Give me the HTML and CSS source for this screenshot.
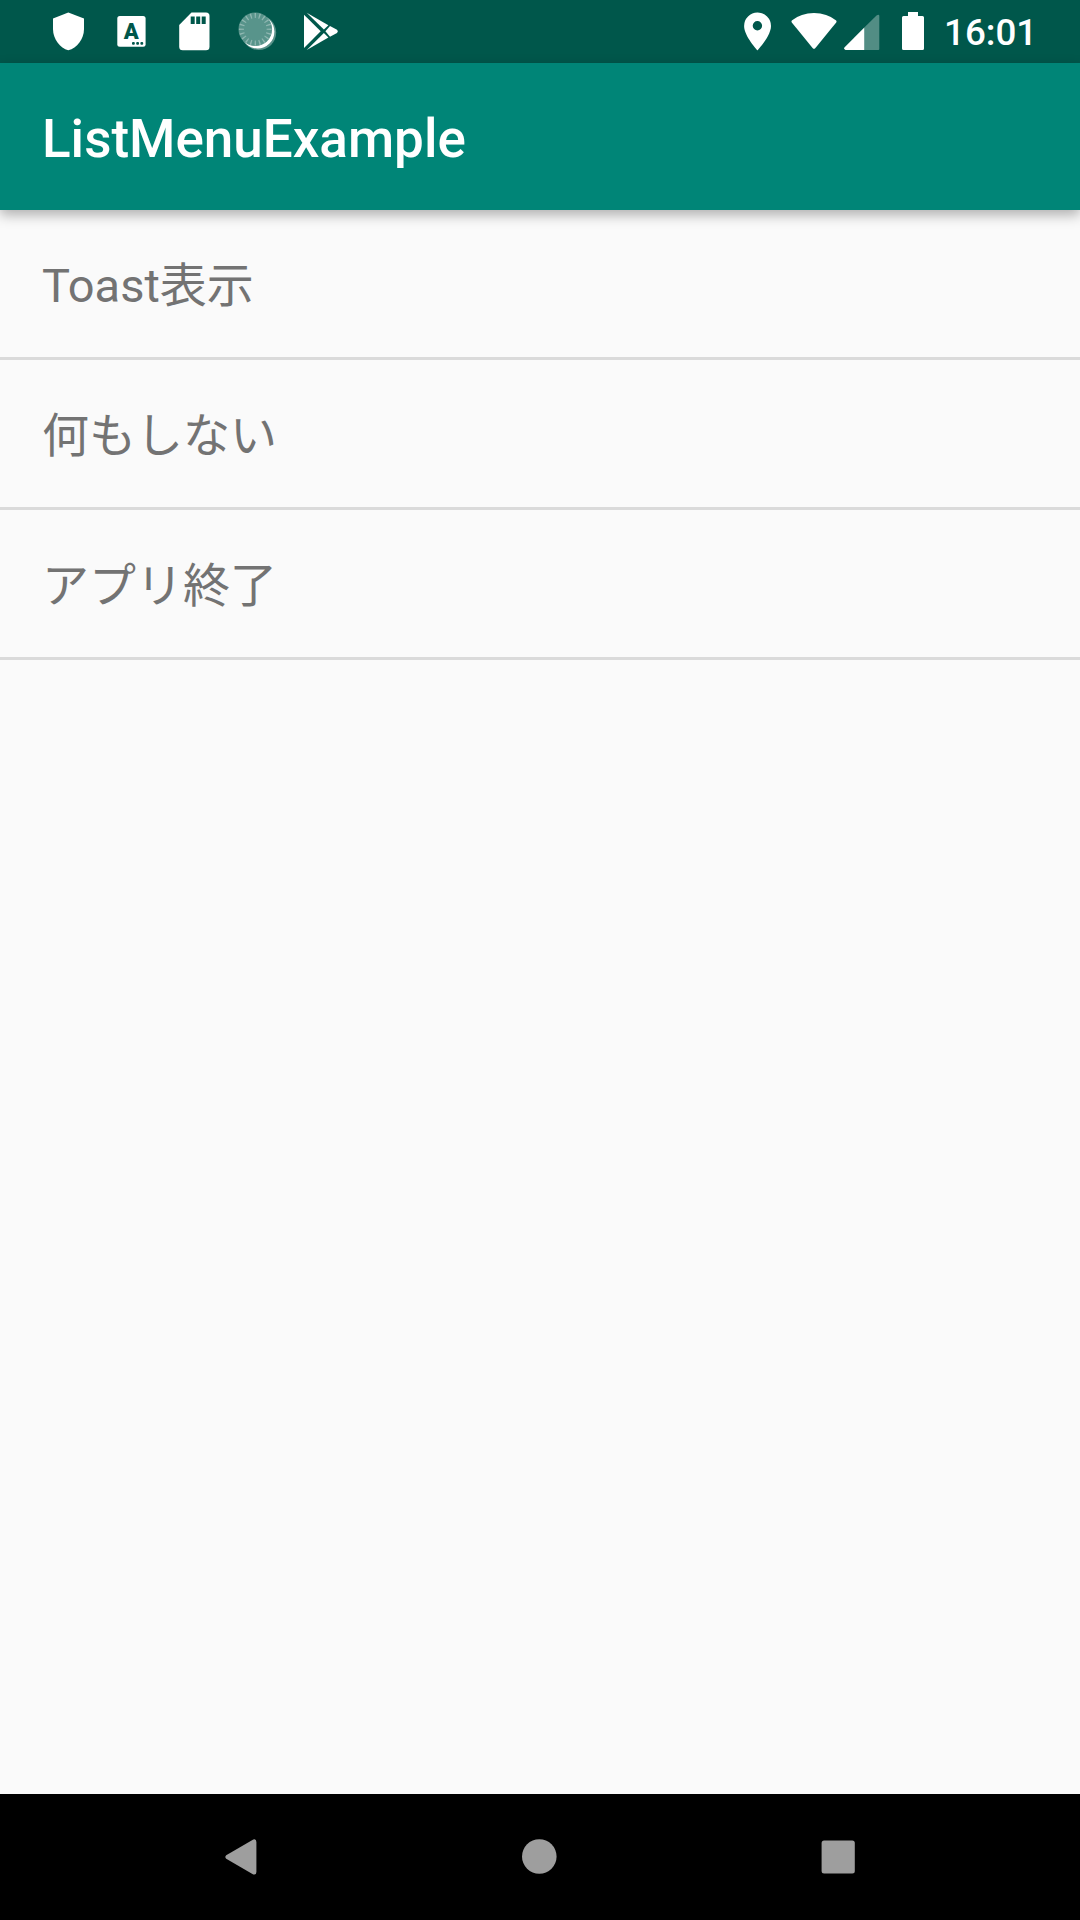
FILE: index.html
```
<!DOCTYPE html>
<html lang="ja">
<head>
    <meta charset="UTF-8">
    <meta name="viewport" content="width=device-width, initial-scale=1.0">
    <title>ListMenuExample</title>
    <link rel="stylesheet" href="styles.css">
</head>
<body>
    <header class="status-bar">
        <div class="notifications">
            <svg width="63" height="63" viewBox="0 0 63 63">
                <path d="M31.3 12.5L47 18.5V29C47 39 40 48 31.3 50.3C23 48 16 39 16 29V18.5Z"/>
            </svg>
            <svg width="63" height="63" viewBox="0 0 63 63">
                <rect x="17.3" y="16" width="28.3" height="30.8" rx="2.5"/>
                <text class="letter" x="31.3" y="38.6" text-anchor="middle">A</text>
                <g class="cut">
                    <rect x="32" y="42" width="2.8" height="2.8" rx="1"/>
                    <rect x="36.2" y="42" width="2.8" height="2.8" rx="1"/>
                    <rect x="40.4" y="42" width="2.8" height="2.8" rx="1"/>
                </g>
            </svg>
            <svg width="63" height="63" viewBox="0 0 63 63">
                <path d="M28.5 12.6H43Q46.5 12.6 46.5 16.1V46.8Q46.5 50.3 43 50.3H19.7Q16.2 50.3 16.2 46.8V25Z"/>
                <path class="cut" d="M27.7 16.5h4v7.5h-4zM33.2 16.5h4v7.5h-4zM38.7 16.5h4v7.5h-4z"/>
            </svg>
            <svg width="63" height="63" viewBox="0 0 63 63">
                <circle cx="32.8" cy="32.6" r="17.4" opacity=".35"/>
                <circle cx="31.6" cy="31.7" r="16.8"/>
                <circle class="dial" cx="29.3" cy="29.3" r="16.8"/>
                <circle class="ticks" cx="29.3" cy="29.3" r="13.8" pathLength="200"/>
            </svg>
            <svg width="63" height="63" viewBox="0 0 63 63">
                <path d="M15 14.7L31.7 31.3L15 48Z"/>
                <path d="M17.7 12.7L39.4 25.2L34.9 29.5Z"/>
                <path d="M17.7 50L39.4 37.5L34.9 33.1Z"/>
                <path d="M41 26L48 29.8Q49.8 31.3 48 32.9L41 36.7L36.4 31.3Z"/>
            </svg>
        </div>
        <div class="system">
            <svg class="pin" width="28" height="63" viewBox="0 0 28 63">
                <path fill-rule="evenodd" d="M13.5 12.5A13.4 13.4 0 0 0 .1 25.9C.1 36 13.5 50.3 13.5 50.3S27 36 27 25.9A13.4 13.4 0 0 0 13.5 12.5ZM13.4 21.1a4.7 4.7 0 1 1 0 9.4a4.7 4.7 0 0 1 0-9.4Z"/>
            </svg>
            <svg class="wifi" width="46" height="63" viewBox="0 0 46 63">
                <path d="M.8 20.5Q10 13 23 13T45.2 20.5Q46 21.5 45.2 22.5L24.2 48.2Q23 49.5 21.8 48.2L.8 22.5Q0 21.5 .8 20.5Z"/>
            </svg>
            <svg class="signal" width="36" height="63" viewBox="0 0 36 63">
                <path opacity=".32" d="M20.3 27.5L32.5 15.4Q35.3 14 35.3 16V49Q35.3 50 34.3 50H20.3Z"/>
                <path d="M20.3 27.5V50H1.5Q-.3 49.2 .4 47.4Z"/>
            </svg>
            <svg class="battery" width="22" height="63" viewBox="0 0 22 63">
                <path d="M6 12H16V16H20.5Q22 16 22 17.5V48.5Q22 50 20.5 50H1.5Q0 50 0 48.5V17.5Q0 16 1.5 16H6Z"/>
            </svg>
            <span class="clock">16:01</span>
        </div>
    </header>

    <div class="app-bar">
        <h1>ListMenuExample</h1>
    </div>

    <ul class="menu">
        <li>Toast表示</li>
        <li>何もしない</li>
        <li>アプリ終了</li>
    </ul>

    <nav class="nav-bar">
        <svg width="36" height="36" viewBox="0 0 36 36">
            <path d="M3.2 16.2L30.3 .5Q33.4 -.3 33.4 3V33Q33.4 36.2 30.3 35.4L3.2 19.7Q1.4 18 3.2 16.2Z"/>
        </svg>
        <svg width="36" height="36" viewBox="0 0 36 36">
            <circle cx="17.3" cy="17.5" r="17.3"/>
        </svg>
        <svg width="36" height="36" viewBox="0 0 36 36">
            <rect x=".6" y="1.4" width="33.2" height="33.2" rx="2.5"/>
        </svg>
    </nav>
</body>
</html>
```
FILE: styles.css
```
* {
    box-sizing: border-box;
}
body {
    margin: 0;
    height: 1920px;
    display: flex;
    flex-direction: column;
    background-color: #fafafa;
    font-family: Roboto, "Noto Sans CJK JP", sans-serif;
}
svg {
    display: block;
    flex: none;
}
.status-bar {
    display: flex;
    justify-content: space-between;
    height: 63px;
    padding: 0 44px 0 37px;
    background-color: #00574b;
    color: #fff;
    fill: #fff;
}
.notifications, .system {
    display: flex;
}
.cut, .letter {
    fill: #00574b;
}
.letter {
    font-size: 22px;
    font-weight: 900;
}
.dial {
    fill: #58948b;
}
.ticks {
    fill: none;
    stroke: #8fb7b1;
    stroke-width: 5;
    stroke-dasharray: 3 7;
    stroke-dashoffset: 1.5;
}
.wifi {
    margin-left: 19px;
}
.signal {
    margin-left: 7px;
}
.battery {
    margin-left: 22px;
}
.clock {
    width: 92px;
    margin-left: 20px;
    font-size: 36.75px;
    font-weight: 500;
    line-height: 66px;
    white-space: nowrap;
}
.app-bar {
    height: 147px;
    padding: 0 42px;
    background-color: #008577;
    box-shadow: 0 5px 12px rgba(0, 0, 0, 0.3);
}
h1 {
    margin: 0;
    color: #fff;
    font-size: 53px;
    font-weight: 500;
    line-height: 152px;
}
.menu {
    flex: 1;
    margin: 0;
    padding: 0;
    list-style: none;
}
.menu li {
    height: 150px;
    padding: 1px 0 0 42px;
    border-bottom: 3px solid #dadada;
    color: #737373;
    font-size: 47px;
    line-height: 150px;
}
.nav-bar {
    display: grid;
    grid-template-columns: repeat(3, 1fr);
    place-items: center;
    height: 126px;
    padding: 0 92px;
    background-color: #000;
    fill: #9e9e9e;
}
```
